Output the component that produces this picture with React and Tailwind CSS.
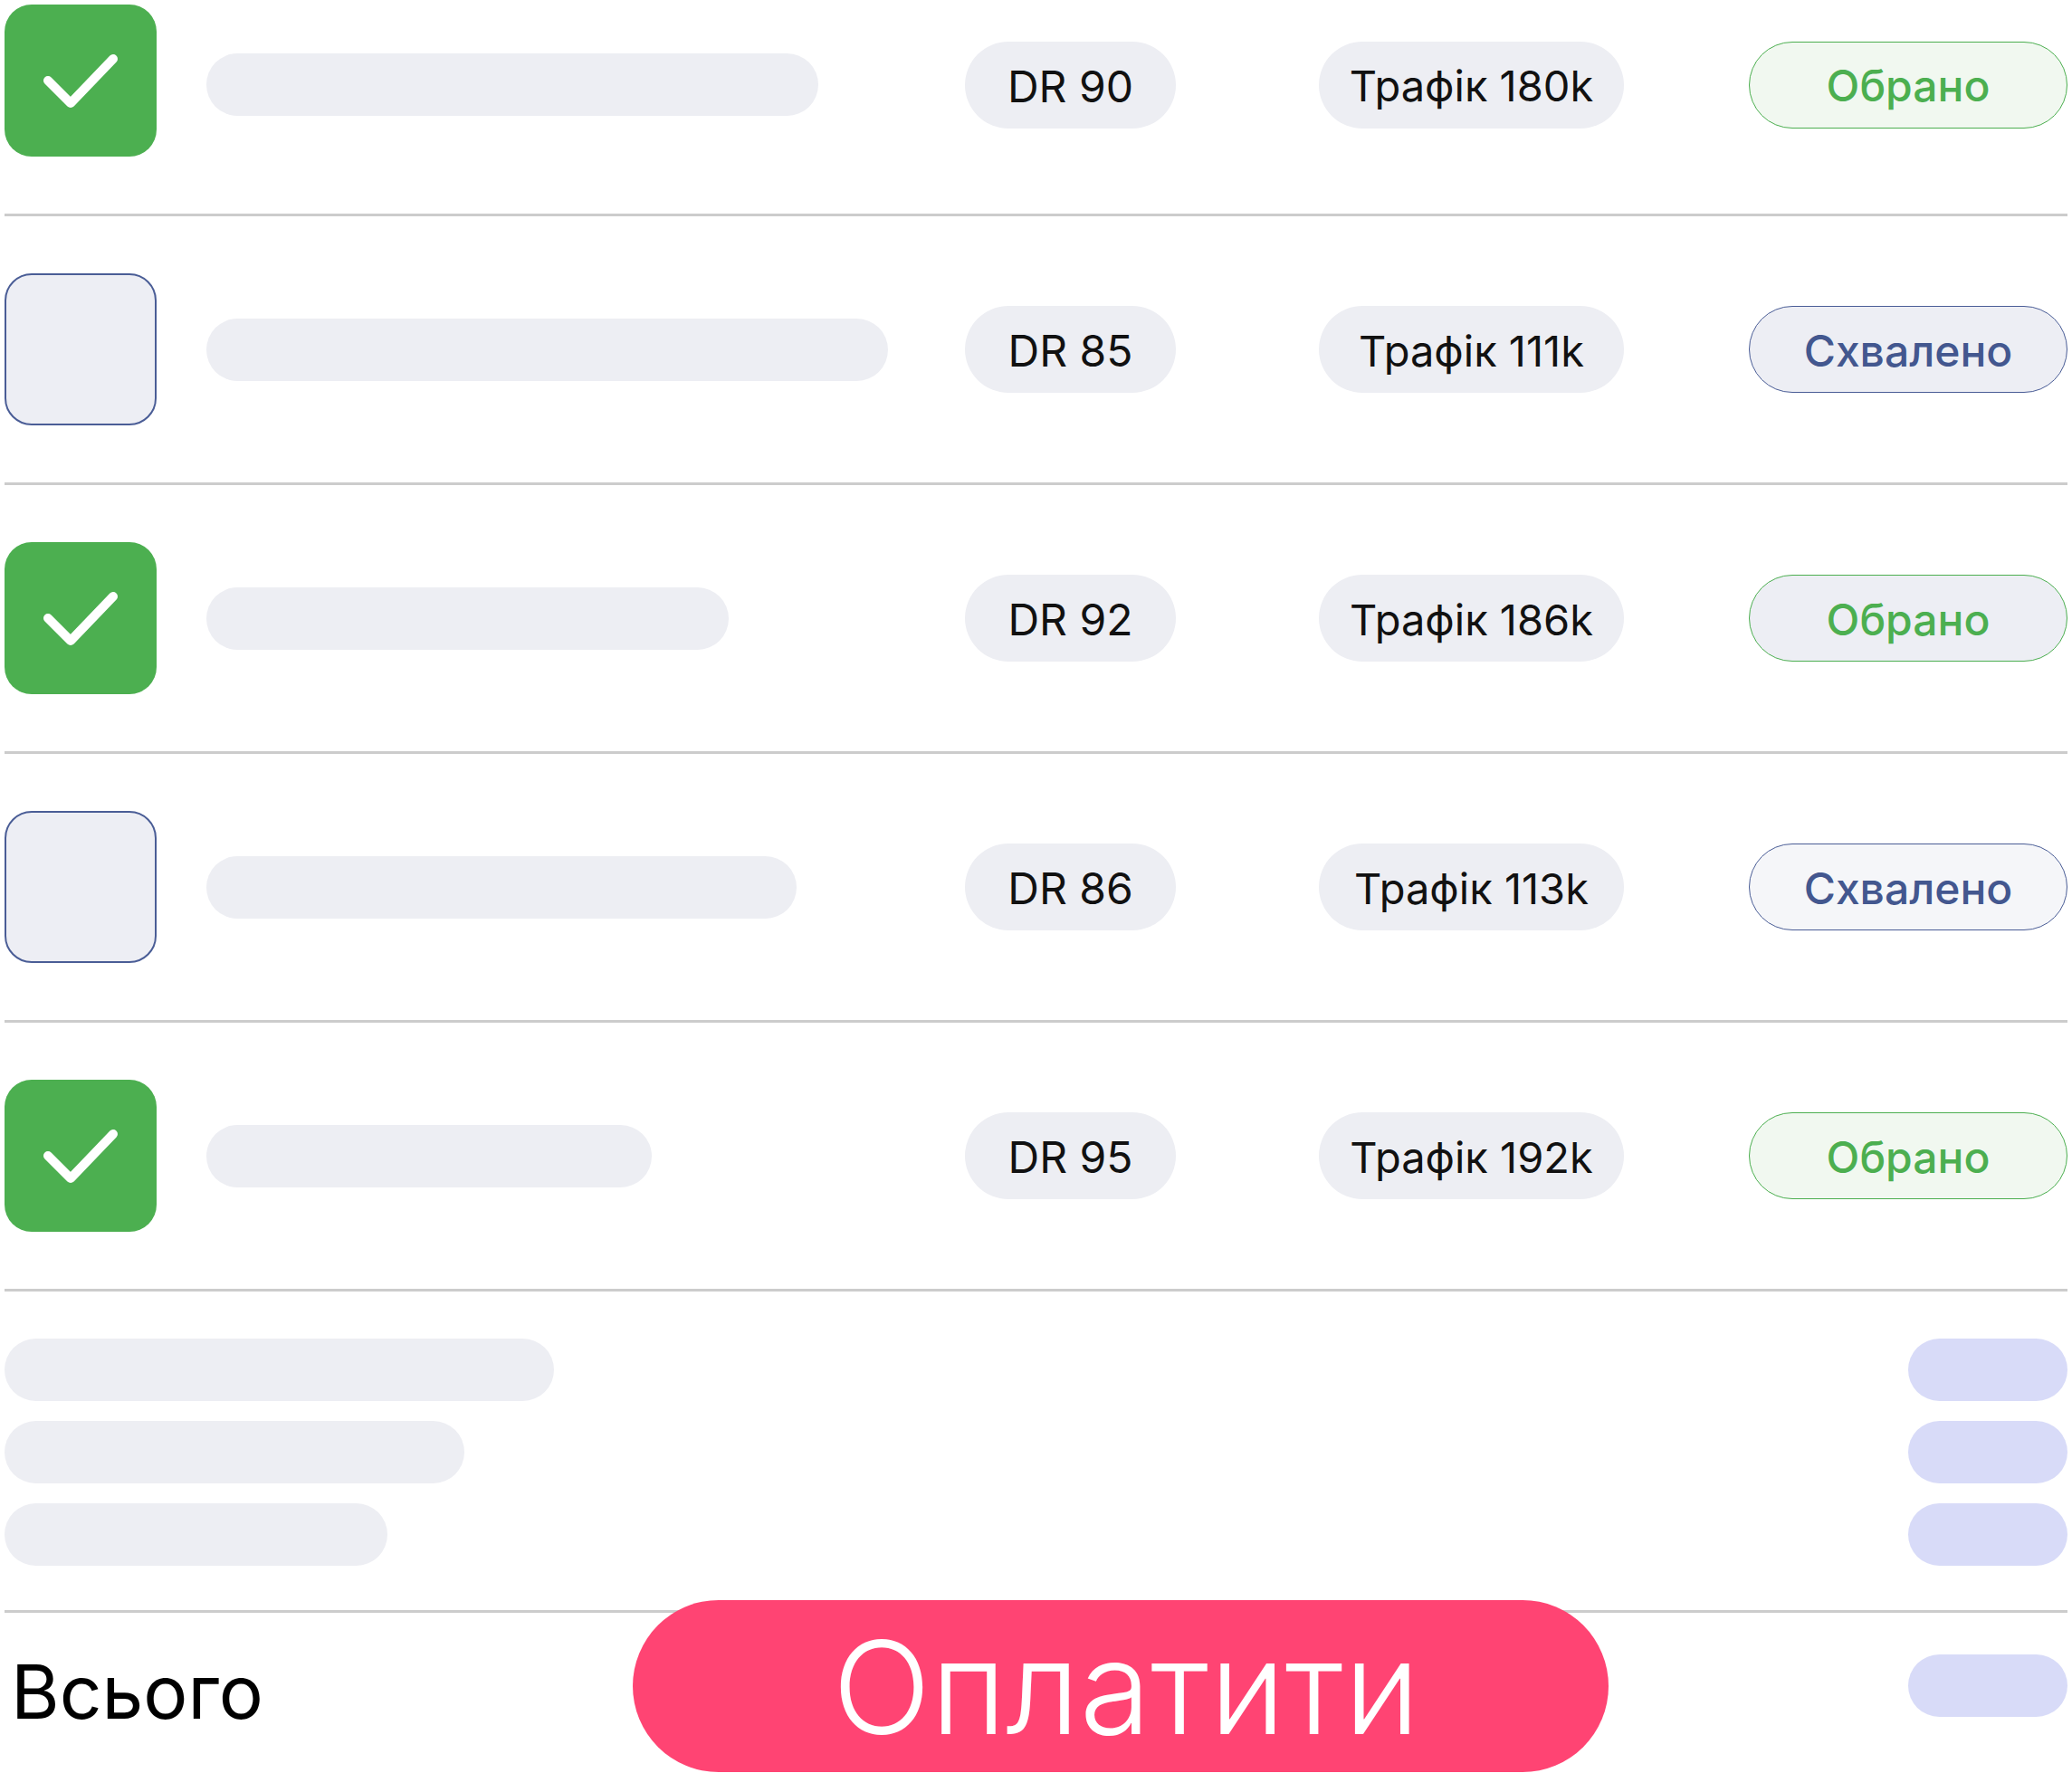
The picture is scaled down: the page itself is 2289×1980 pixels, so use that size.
const sites = [
  { checked: true, bar: "w-[676px]", dr: 90, traffic: "180k", status: "picked", statusBg: "bg-[#f1f8f0]", first: true },
  { checked: false, bar: "w-[753px]", dr: 85, traffic: "111k", status: "approved", statusBg: "bg-[#edeef4]" },
  { checked: true, bar: "w-[577px]", dr: 92, traffic: "186k", status: "picked", statusBg: "bg-[#edeef4]" },
  { checked: false, bar: "w-[652px]", dr: 86, traffic: "113k", status: "approved", statusBg: "bg-[#f5f6f9]" },
  { checked: true, bar: "w-[492px]", dr: 95, traffic: "192k", status: "picked", statusBg: "bg-[#f1f8f0]" },
];

const summaryBars = ["w-[607px]", "w-[508px]", "w-[423px]"];

function Checkbox({ checked, first }) {
  if (!checked) {
    return (
      <div className="w-[168px] h-[168px] shrink-0 rounded-[30px] border-2 border-[#4a5d96] bg-[#edeef4]" />
    );
  }
  return (
    <div
      className={`w-[168px] h-[168px] shrink-0 rounded-[30px] bg-[#4caf50] ${first ? "mb-[9px]" : ""}`}
    >
      <svg viewBox="0 0 168 168" className="w-full h-full">
        <path
          d="M48 84 L73 109 L120 60"
          fill="none"
          stroke="#fff"
          strokeWidth="10"
          strokeLinecap="round"
          strokeLinejoin="round"
        />
      </svg>
    </div>
  );
}

function StatusPill({ status, bg }) {
  const picked = status === "picked";
  return (
    <div
      className={`w-[352px] h-[96px] shrink-0 rounded-full flex items-center justify-center pt-[3px] text-[48px] font-medium border-[1.5px] ${bg} ${
        picked ? "border-[#4caf50] text-[#4caf50]" : "border-[#4a5d96] text-[#43578f]"
      }`}
    >
      {picked ? "Обрано" : "Схвалено"}
    </div>
  );
}

function SiteRow({ site }) {
  return (
    <div
      className={`flex items-center border-b-[3px] border-[#cccccc] ${
        site.first ? "h-[239px] pb-[49px]" : "h-[297px]"
      }`}
    >
      <Checkbox checked={site.checked} first={site.first} />
      <div className="w-[893px] pl-[55px] shrink-0">
        <div className={`h-[69px] rounded-full bg-[#edeef3] ${site.bar}`} />
      </div>
      <div className="w-[233px] h-[96px] shrink-0 rounded-full bg-[#edeef3] flex items-center justify-center pt-[4px] text-[48px] text-[#111]">
        DR {site.dr}
      </div>
      <div className="ml-[158px] w-[337px] h-[96px] shrink-0 rounded-full bg-[#edeef3] flex items-center justify-center pt-[4px] text-[47px] text-[#111]">
        Трафік {site.traffic}
      </div>
      <div className="ml-[138px]">
        <StatusPill status={site.status} bg={site.statusBg} />
      </div>
    </div>
  );
}

export default function App() {
  return (
    <div className="w-[2289px] h-[1980px] bg-white font-['Inter','Noto_Sans',sans-serif] overflow-hidden">
      <div className="mx-[5px]">
        {sites.map((site) => (
          <SiteRow key={site.dr} site={site} />
        ))}

        {/* order summary placeholders */}
        <div className="flex flex-col gap-[22px] pt-[52px] pb-[49px] border-b-[3px] border-[#cccccc]">
          {summaryBars.map((w) => (
            <div key={w} className="flex items-center justify-between">
              <div className={`h-[69px] rounded-full bg-[#edeef3] ${w}`} />
              <div className="w-[176px] h-[69px] rounded-full bg-[#d8dbf8]" />
            </div>
          ))}
        </div>

        <div className="flex items-center h-[176px]">
          <div className="w-[694px] shrink-0 pl-[7px] text-[82px] leading-none text-black">Всього</div>
          <button className="-mt-[14px] w-[1078px] h-[190px] shrink-0 rounded-full bg-[#ff4473] text-white text-[143px] font-light leading-none flex items-center justify-center pl-[12px]">
            Оплатити
          </button>
          <div className="flex-1" />
          <div className="w-[176px] h-[69px] mb-[15px] rounded-full bg-[#d8dbf8]" />
        </div>
      </div>
    </div>
  );
}
